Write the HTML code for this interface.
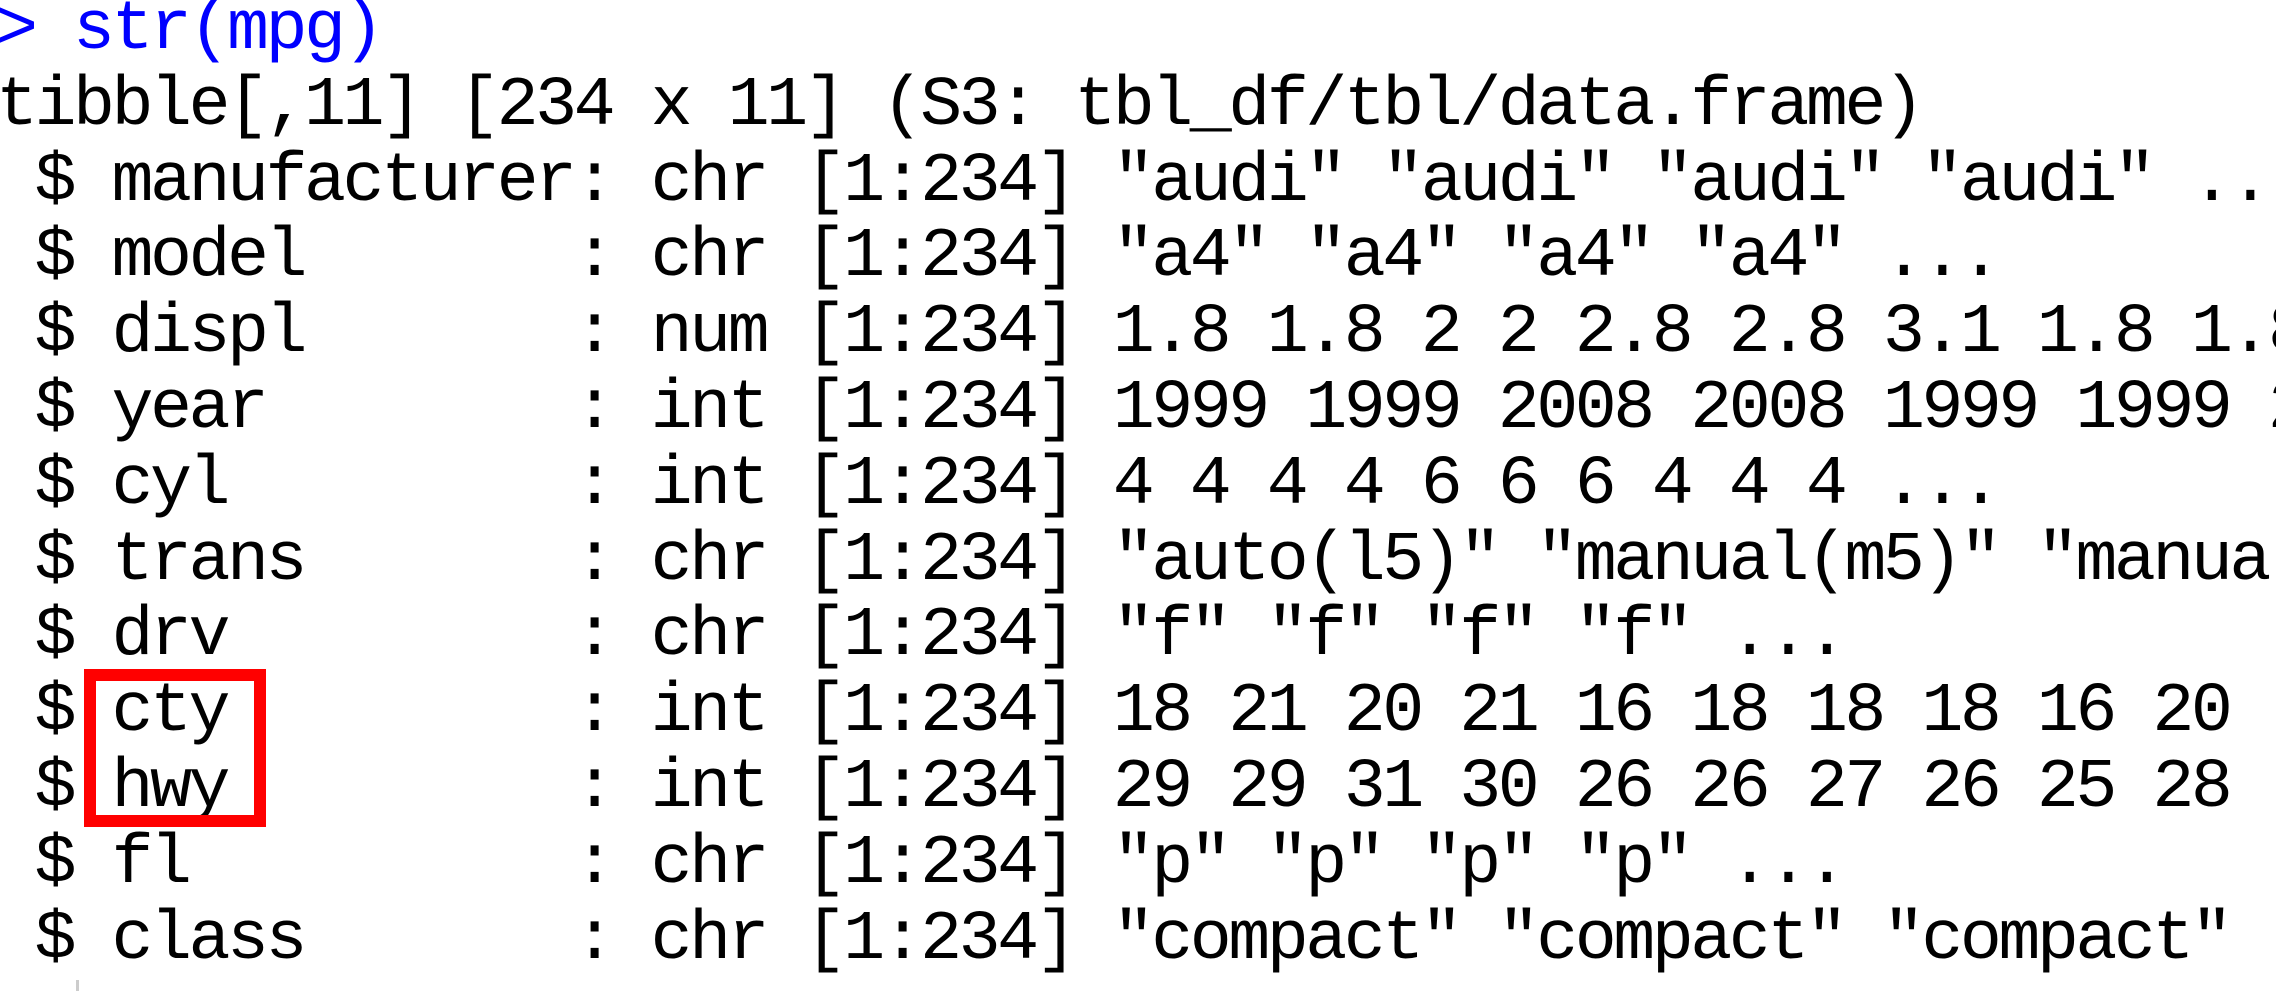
<!DOCTYPE html>
<html><head><meta charset="utf-8">
<style>
html,body{margin:0;padding:0;background:#fff;}
body{width:2276px;height:991px;overflow:hidden;position:relative;}
pre{position:absolute;left:-4px;top:-7px;margin:0;font-family:"Liberation Mono",monospace;font-size:70px;letter-spacing:-3.5px;line-height:75.8px;color:#000;white-space:pre;}
.b{color:#0000ff;}
.box{position:absolute;left:84px;top:669px;width:158px;height:134px;border:12px solid #f00;}
.tick{position:absolute;left:76px;top:980px;width:3px;height:11px;background:#ccc;}
</style></head><body>
<pre><span class="b">&gt; str(mpg)</span>
tibble[,11] [234 x 11] (S3: tbl_df/tbl/data.frame)
 $ manufacturer: chr [1:234] "audi" "audi" "audi" "audi" ...
 $ model       : chr [1:234] "a4" "a4" "a4" "a4" ...
 $ displ       : num [1:234] 1.8 1.8 2 2 2.8 2.8 3.1 1.8 1.8 2 ...
 $ year        : int [1:234] 1999 1999 2008 2008 1999 1999 2008 1999 1999 2008 ...
 $ cyl         : int [1:234] 4 4 4 4 6 6 6 4 4 4 ...
 $ trans       : chr [1:234] "auto(l5)" "manual(m5)" "manual(m6)" "auto(av)" ...
 $ drv         : chr [1:234] "f" "f" "f" "f" ...
 $ cty         : int [1:234] 18 21 20 21 16 18 18 18 16 20 ...
 $ hwy         : int [1:234] 29 29 31 30 26 26 27 26 25 28 ...
 $ fl          : chr [1:234] "p" "p" "p" "p" ...
 $ class       : chr [1:234] "compact" "compact" "compact" "compact" ...</pre>
<div class="box"></div>
<div class="tick"></div>
</body></html>
